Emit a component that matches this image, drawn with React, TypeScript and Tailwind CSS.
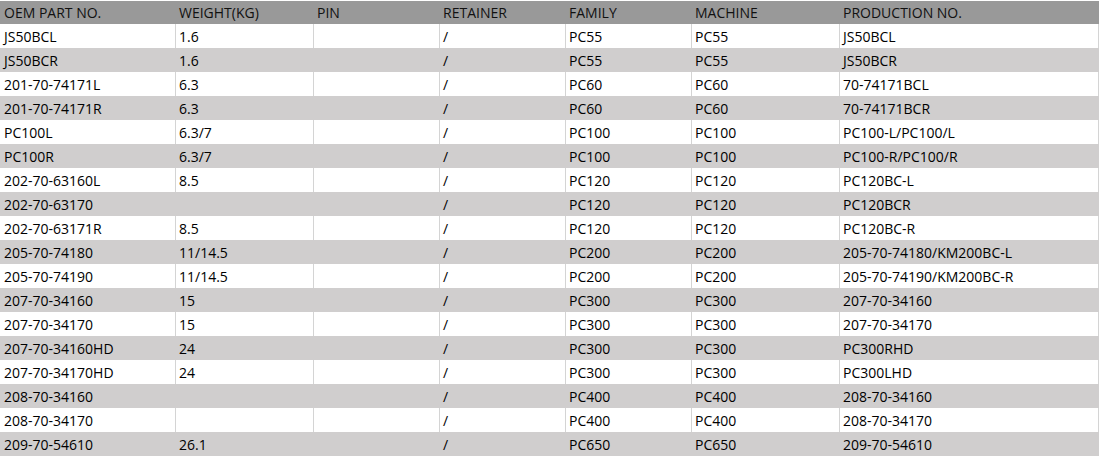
import React from "react";

const headers = ["OEM PART NO.", "WEIGHT(KG)", "PIN", "RETAINER", "FAMILY", "MACHINE", "PRODUCTION NO."];

const rows: string[][] = [
  ["JS50BCL", "1.6", "", "/", "PC55", "PC55", "JS50BCL"],
  ["JS50BCR", "1.6", "", "/", "PC55", "PC55", "JS50BCR"],
  ["201-70-74171L", "6.3", "", "/", "PC60", "PC60", "70-74171BCL"],
  ["201-70-74171R", "6.3", "", "/", "PC60", "PC60", "70-74171BCR"],
  ["PC100L", "6.3/7", "", "/", "PC100", "PC100", "PC100-L/PC100/L"],
  ["PC100R", "6.3/7", "", "/", "PC100", "PC100", "PC100-R/PC100/R"],
  ["202-70-63160L", "8.5", "", "/", "PC120", "PC120", "PC120BC-L"],
  ["202-70-63170", "", "", "/", "PC120", "PC120", "PC120BCR"],
  ["202-70-63171R", "8.5", "", "/", "PC120", "PC120", "PC120BC-R"],
  ["205-70-74180", "11/14.5", "", "/", "PC200", "PC200", "205-70-74180/KM200BC-L"],
  ["205-70-74190", "11/14.5", "", "/", "PC200", "PC200", "205-70-74190/KM200BC-R"],
  ["207-70-34160", "15", "", "/", "PC300", "PC300", "207-70-34160"],
  ["207-70-34170", "15", "", "/", "PC300", "PC300", "207-70-34170"],
  ["207-70-34160HD", "24", "", "/", "PC300", "PC300", "PC300RHD"],
  ["207-70-34170HD", "24", "", "/", "PC300", "PC300", "PC300LHD"],
  ["208-70-34160", "", "", "/", "PC400", "PC400", "208-70-34160"],
  ["208-70-34170", "", "", "/", "PC400", "PC400", "208-70-34170"],
  ["209-70-54610", "26.1", "", "/", "PC650", "PC650", "209-70-54610"],
];

const grid = "grid grid-cols-[176px_138px_126px_126px_126px_148px_259px]";

export default function App() {
  return (
    <div
      className="w-[1099px] h-[457px] bg-white pt-px text-[14px] text-black overflow-hidden"
      style={{ fontFamily: '"Open Sans", "Liberation Sans", sans-serif' }}
    >
      <div className={`${grid} h-[23px] bg-[#999999] text-[#111111]`}>
        {headers.map((h, i) => (
          <div key={i} className={`${i === 0 ? "pl-1" : "pl-[3px]"} leading-[23px] whitespace-nowrap`}>
            {h}
          </div>
        ))}
      </div>
      {rows.map((r, ri) => {
        const gray = ri % 2 === 1;
        return (
          <div key={ri} className={`${grid} h-6 ${gray ? "bg-[#d0cece]" : "bg-white"}`}>
            {r.map((c, ci) => (
              <div
                key={ci}
                className={`${ci === 0 ? "pl-1" : "pl-[3px]"} pt-px leading-[23px] whitespace-nowrap border-r ${
                  gray ? "border-[#d0cece]" : "border-[#d4d4d4]"
                }`}
              >
                {c}
              </div>
            ))}
          </div>
        );
      })}
    </div>
  );
}
